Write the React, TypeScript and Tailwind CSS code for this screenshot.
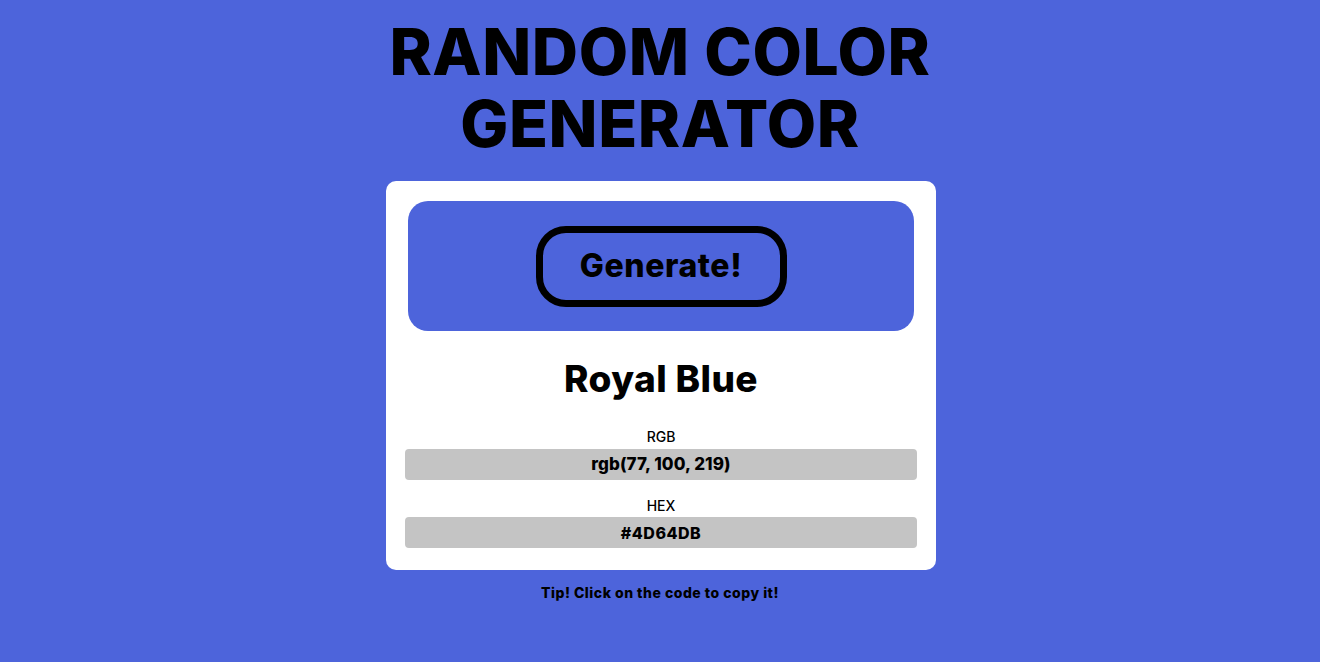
import React from "react";

export default function App() {
  const font = { fontFamily: "Inter, 'Noto Sans', sans-serif" };
  return (
    <div className="min-h-[662px] w-full bg-[#4d64db] flex flex-col items-center text-black" style={font}>
      <h1 className="mt-[16px] text-center text-[64px] leading-[72px] font-extrabold tracking-[0.6px]">
        RANDOM COLOR
        <br />
        GENERATOR
      </h1>
      <div className="mt-[21px] ml-[2px] w-[550px] bg-white rounded-[10px] px-[19px] pt-[20px] pb-[22px] flex flex-col items-stretch">
        <div className="mx-[3px] h-[130px] bg-[#4d64db] rounded-[20px] flex items-center justify-center">
          <button className="w-[251px] h-[81px] border-[7px] border-black rounded-[30px] text-[32px] font-extrabold tracking-[0.6px]">
            Generate!
          </button>
        </div>
        <h2 className="mt-[26px] text-center text-[37px] leading-[44px] font-extrabold tracking-[0.4px]">Royal Blue</h2>
        <div className="mt-[26px] text-center text-[14px] leading-[20px] font-medium">RGB</div>
        <div className="mt-[2px] h-[31px] bg-[#c4c4c4] rounded-[4px] flex items-center justify-center text-[17px] font-extrabold tracking-[0.1px]">
          rgb(77, 100, 219)
        </div>
        <div className="mt-[16px] text-center text-[14px] leading-[20px] font-medium">HEX</div>
        <div className="mt-[1px] h-[31px] bg-[#c4c4c4] rounded-[4px] flex items-center justify-center text-[16px] font-extrabold tracking-[0.5px]">
          #4D64DB
        </div>
      </div>
      <p className="mt-[13px] text-[14px] leading-[20px] font-extrabold tracking-[0.5px]">Tip! Click on the code to copy it!</p>
    </div>
  );
}
